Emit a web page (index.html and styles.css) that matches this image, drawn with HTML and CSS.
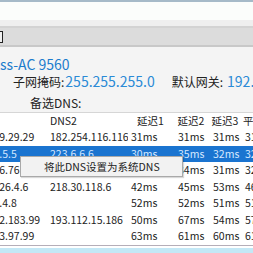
FILE: index.html
```html
<!DOCTYPE html>
<html lang="zh-CN">
<head>
<meta charset="utf-8">
<title>DNS</title>
<link rel="stylesheet" href="styles.css">
</head>
<body>
<div class="win">
  <div class="topline"></div>
  <div class="titlebar"></div>
  <div class="strip"></div>
  <div class="toolbar"><span class="mark"></span></div>
  <div class="info">
    <div class="adapter">Wireless-AC 9560</div>
    <div class="line2">
      <span class="lbl mask-lbl">子网掩码:</span><span class="val mask-val">255.255.255.0</span>
      <span class="lbl gw-lbl">默认网关:</span><span class="val gw-val">192.168.1.1</span>
    </div>
    <div class="line3"><span class="lbl">备选DNS:</span></div>
  </div>
  <div class="list">
    <div class="scroller">
      <div class="row head">
        <span class="c1">DNS1</span><span class="c2">DNS2</span><span class="c3">延迟1</span><span class="c4">延迟2</span><span class="c5">延迟3</span><span class="c6">平均延迟</span>
      </div>
      <div class="row"><span class="c1">119.29.29.29</span><span class="c2">182.254.116.116</span><span class="c3">31ms</span><span class="c4">31ms</span><span class="c5">31ms</span><span class="c6">31ms</span></div>
      <div class="row sel"><span class="c1">223.5.5.5</span><span class="c2">223.6.6.6</span><span class="c3">30ms</span><span class="c4">35ms</span><span class="c5">32ms</span><span class="c6">32ms</span></div>
      <div class="row"><span class="c1">180.76.76.76</span><span class="c2"></span><span class="c3">33ms</span><span class="c4">34ms</span><span class="c5">31ms</span><span class="c6">32ms</span></div>
      <div class="row"><span class="c1">101.226.4.6</span><span class="c2">218.30.118.6</span><span class="c3">42ms</span><span class="c4">45ms</span><span class="c5">53ms</span><span class="c6">46ms</span></div>
      <div class="row"><span class="c1">210.2.4.8</span><span class="c2"></span><span class="c3">52ms</span><span class="c4">52ms</span><span class="c5">51ms</span><span class="c6">51ms</span></div>
      <div class="row"><span class="c1">101.52.183.99</span><span class="c2">193.112.15.186</span><span class="c3">50ms</span><span class="c4">67ms</span><span class="c5">54ms</span><span class="c6">57ms</span></div>
      <div class="row"><span class="c1">218.63.97.99</span><span class="c2"></span><span class="c3">63ms</span><span class="c4">61ms</span><span class="c5">60ms</span><span class="c6">61ms</span></div>
    </div>
    <div class="menu"><span class="menu-item">将此DNS设置为系统DNS</span></div>
  </div>
  <div class="bottomline"></div>
  <div class="statusbar"></div>
</div>
</body>
</html>
```

FILE: styles.css
```css
html, body {
  margin: 0;
  padding: 0;
}
body {
  width: 253px;
  height: 253px;
  overflow: hidden;
  background: #f4f4f4;
  font-family: "Noto Sans CJK SC", "Noto Sans", sans-serif;
  color: #222;
}
.win {
  display: flex;
  flex-direction: column;
  width: 253px;
  height: 253px;
  overflow: hidden;
}
.topline {
  height: 2px;
  background: #a6bac8;
  flex: none;
}
.titlebar {
  height: 18px;
  background: #fbfdfb;
  flex: none;
}
.strip {
  height: 6px;
  background: #efefef;
  border-bottom: 2px solid #d3d3d3;
  flex: none;
}
.toolbar {
  height: 17px;
  background: #dcdcdc;
  border-bottom: 2px solid #c8c8c8;
  flex: none;
  display: flex;
  align-items: center;
}
.mark {
  width: 2px;
  height: 10px;
  border: 1px solid #222;
  border-left: none;
  background: #f0f0f0;
}
.info {
  flex: none;
  padding-top: 8px;
  background: #f4f4f4;
}
.adapter {
  font-size: 14px;
  line-height: 18px;
  height: 18px;
  color: #1c7ccd;
  white-space: nowrap;
  margin-left: -41px;
}
.line2 {
  height: 16px;
  line-height: 16px;
  white-space: nowrap;
  padding-left: 13px;
  display: flex;
  align-items: baseline;
}
.lbl {
  font-size: 12px;
  color: #222;
}
.val {
  font-size: 14px;
  color: #2a8ad6;
}
.mask-val {
  margin-left: 1px;
}
.gw-lbl {
  margin-left: 17px;
}
.gw-val {
  margin-left: 4px;
}
.line3 {
  height: 16px;
  line-height: 16px;
  margin-top: 4px;
  padding-left: 30px;
}
.list {
  position: relative;
  flex: none;
  margin-top: 3px;
  border-top: 1px solid #d6d6d6;
  background: #ffffff;
  height: 132px;
  overflow: hidden;
}
.scroller {
  margin-left: -27px;
  width: 320px;
}
.row {
  display: grid;
  grid-template-columns: 77px 78px 45px 36px 32px 52px;
  height: 16.5px;
  line-height: 16.5px;
  font-size: 10.5px;
  color: #222;
  white-space: nowrap;
}
.row span {
  overflow: hidden;
}
.row .c3 { padding-left: 3px; }
.row .c4 { padding-left: 5px; }
.row .c5 { padding-left: 4px; }
.row .c6 { padding-left: 4px; }
.head {
  height: 16px;
  line-height: 16px;
}
.head .c3, .head .c4, .head .c5 {
  padding-left: 0;
  text-align: center;
}
.head .c6 {
  padding-left: 2px;
}
.sel {
  background: #1a74d0;
  color: #d6e8ff;
}
.menu {
  position: absolute;
  left: 20px;
  top: 43px;
  width: 161px;
  height: 19px;
  background: #f2f2f2;
  border: 1px solid #a9a9a9;
  box-shadow: 1px 1px 1px rgba(0,0,0,0.15);
  display: flex;
  align-items: center;
}
.menu-item {
  font-size: 10.5px;
  color: #222;
  padding-left: 23px;
  white-space: nowrap;
}
.bottomline {
  height: 1px;
  background: #b5aeb9;
  flex: none;
}
.statusbar {
  flex: 1;
  border-top: 2px solid #ffffff;
  background: #c3e8f6;
}
```
